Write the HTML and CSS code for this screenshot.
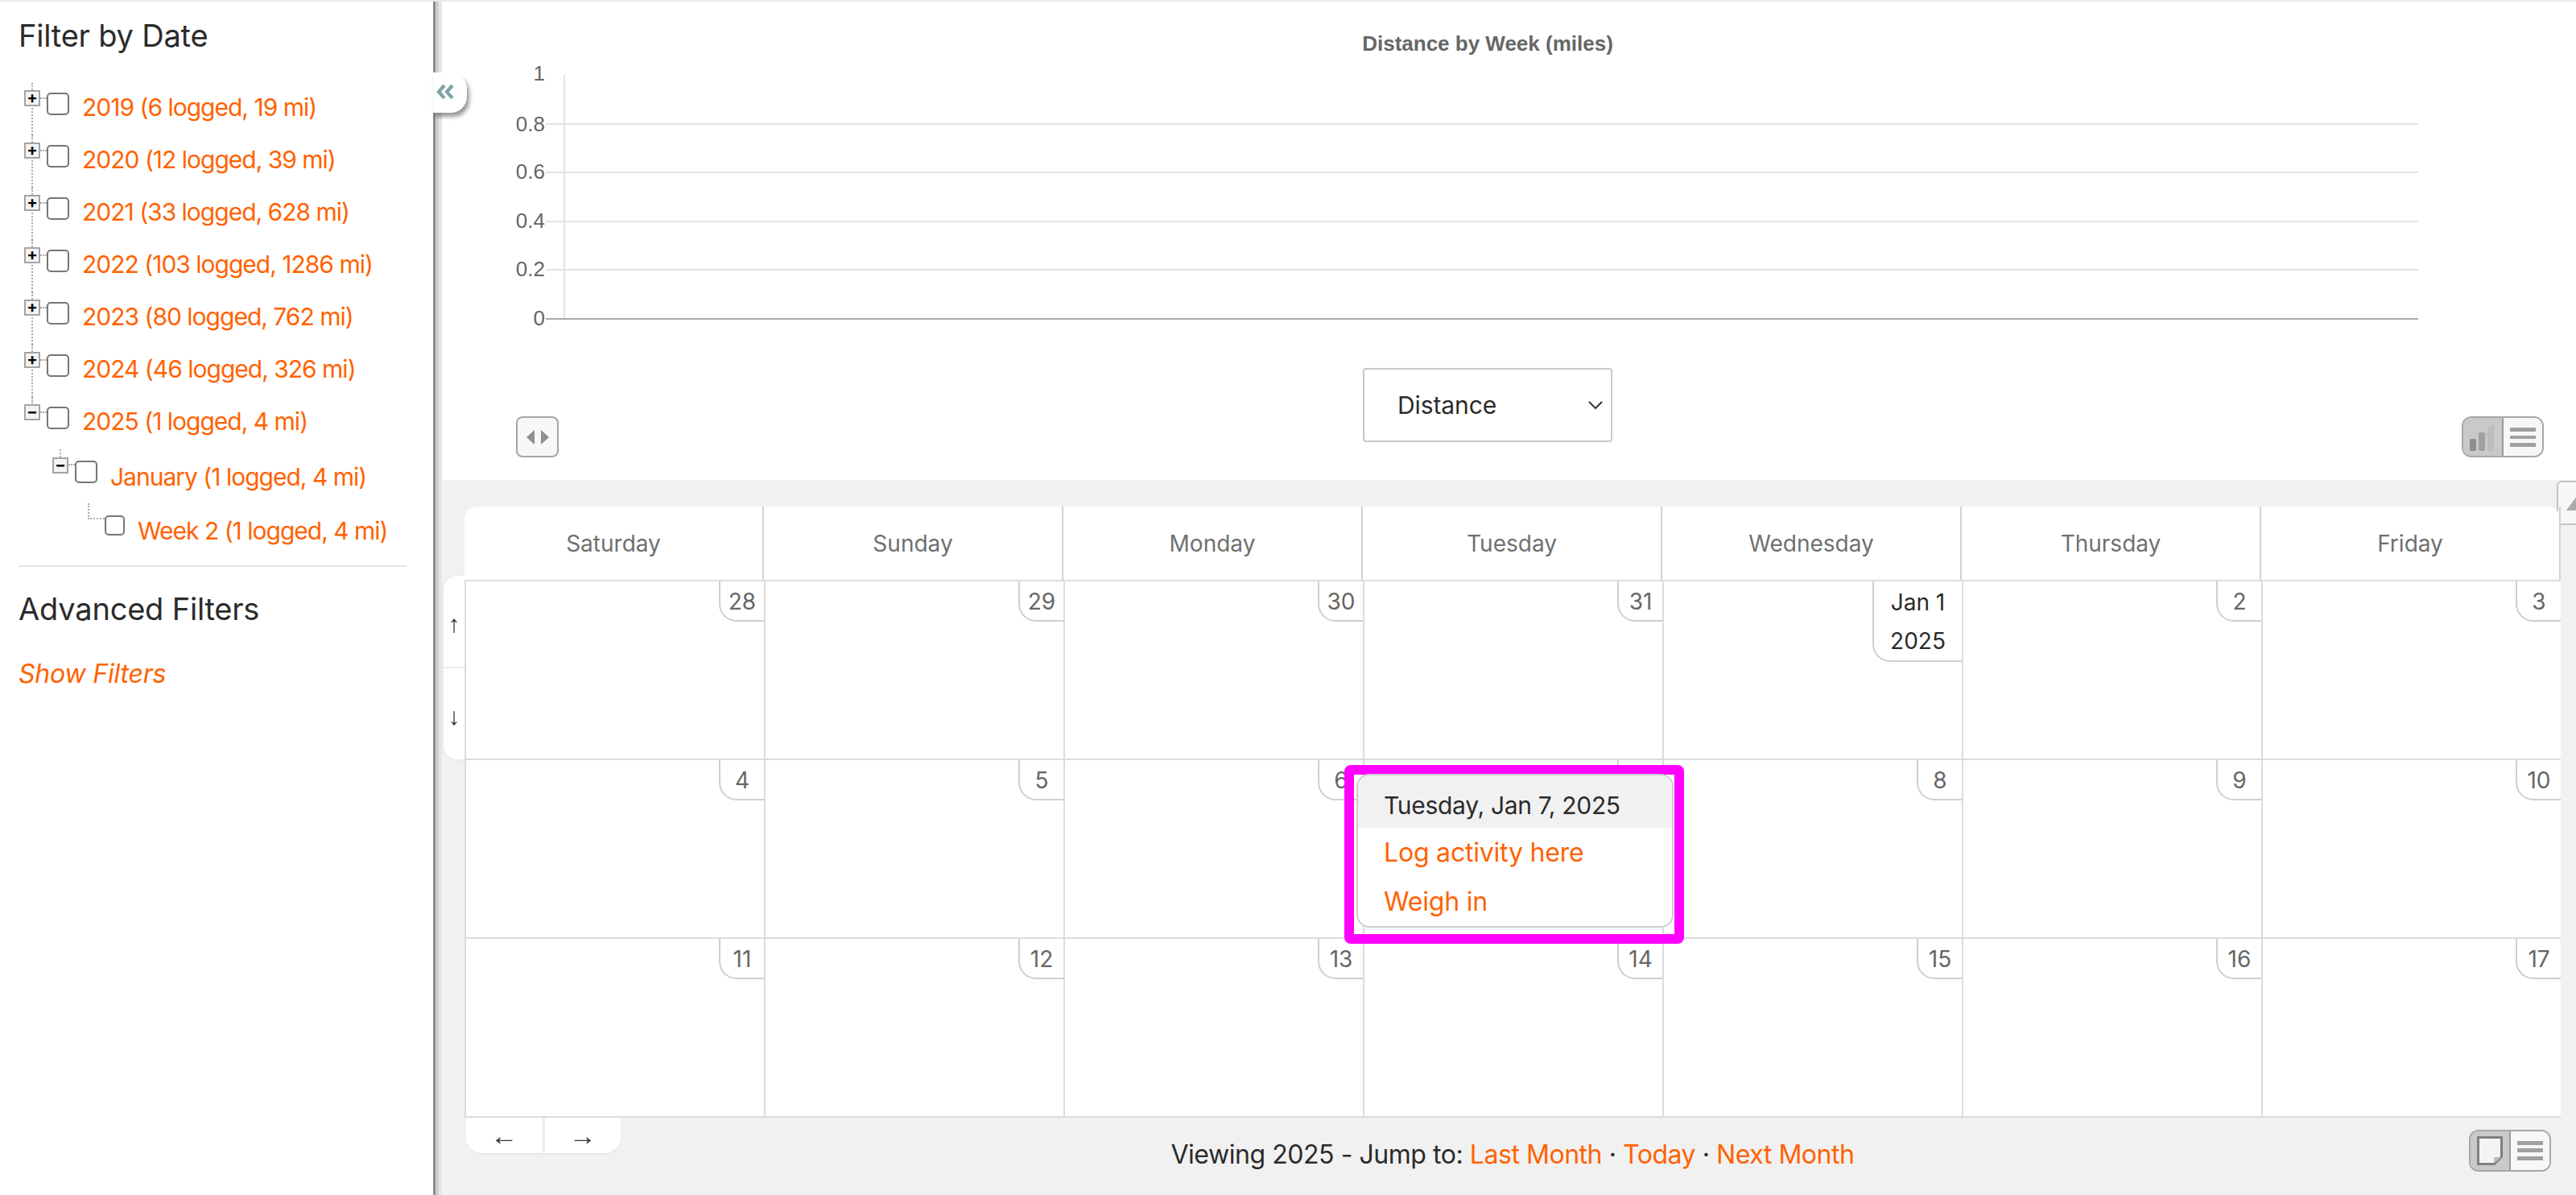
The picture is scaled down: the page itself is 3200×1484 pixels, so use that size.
FILE: index.html
```html
<!DOCTYPE html>
<html lang="en">
    <head>
        <meta charset="UTF-8" />
        <meta name="viewport" content="width=device-width, initial-scale=1.0" />
        <title>Activity log</title>
        <link rel="stylesheet" href="styles.css">
    </head>
    <body>
        <div class="page">
            <aside class="sidebar">
                <h2 class="side-title">Filter by Date</h2>
                <ul class="tree">
                    <li class="tree-row year">
                        <span class="toggle">+</span><span class="dash"></span><input type="checkbox" /><a class="tree-link" href="#">2019 (6 logged, 19 mi)</a>
                    </li>
                    <li class="tree-row year">
                        <span class="toggle">+</span><span class="dash"></span><input type="checkbox" /><a class="tree-link" href="#">2020 (12 logged, 39 mi)</a>
                    </li>
                    <li class="tree-row year">
                        <span class="toggle">+</span><span class="dash"></span><input type="checkbox" /><a class="tree-link" href="#">2021 (33 logged, 628 mi)</a>
                    </li>
                    <li class="tree-row year">
                        <span class="toggle">+</span><span class="dash"></span><input type="checkbox" /><a class="tree-link" href="#">2022 (103 logged, 1286 mi)</a>
                    </li>
                    <li class="tree-row year">
                        <span class="toggle">+</span><span class="dash"></span><input type="checkbox" /><a class="tree-link" href="#">2023 (80 logged, 762 mi)</a>
                    </li>
                    <li class="tree-row year">
                        <span class="toggle">+</span><span class="dash"></span><input type="checkbox" /><a class="tree-link" href="#">2024 (46 logged, 326 mi)</a>
                    </li>
                    <li class="tree-row year last">
                        <span class="toggle">&minus;</span><span class="dash"></span><input type="checkbox" /><a class="tree-link" href="#">2025 (1 logged, 4 mi)</a>
                    </li>
                    <li class="tree-row month">
                        <span class="toggle">&minus;</span><span class="dash"></span><input type="checkbox" /><a class="tree-link" href="#">January (1 logged, 4 mi)</a>
                    </li>
                    <li class="tree-row week">
                        <span class="elbow"></span><input type="checkbox" /><a class="tree-link" href="#">Week 2 (1 logged, 4 mi)</a>
                    </li>
                </ul>
                <hr class="side-rule" />
                <h2 class="side-title advanced">Advanced Filters</h2>
                <a class="show-filters" href="#">Show Filters</a>
                <button class="collapse" aria-label="Collapse">
                    <svg width="24" height="18" viewBox="0 0 24 18"><path d="M11 1 4 9l7 8M21 1l-7 8 7 8" fill="none" stroke="#7fa3a8" stroke-width="4.200"/></svg>
                </button>
            </aside>

            <main class="content">
                <section class="chart-panel">
                    <svg class="chart" width="2659" height="455" viewBox="541 2 2659 455">
                        <text class="chart-title" x="1848" y="63">Distance by Week (miles)</text>
                        <g class="chart-grid">
                            <line x1="678" y1="154" x2="3004" y2="154" />
                            <line x1="678" y1="214" x2="3004" y2="214" />
                            <line x1="678" y1="275" x2="3004" y2="275" />
                            <line x1="678" y1="335" x2="3004" y2="335" />
                            <line x1="701" y1="93" x2="701" y2="396" />
                        </g>
                        <line class="chart-axis" x1="678" y1="396" x2="3004" y2="396" />
                        <g class="chart-labels">
                            <text x="677" y="100">1</text>
                            <text x="677" y="163">0.8</text>
                            <text x="677" y="222">0.6</text>
                            <text x="677" y="283">0.4</text>
                            <text x="677" y="343">0.2</text>
                            <text x="677" y="404">0</text>
                        </g>
                    </svg>
                    <div class="chart-controls">
                        <button class="icon-btn" aria-label="Pan">
                            <svg width="30" height="20" viewBox="0 0 30 20"><path d="M11 1v18L1 10zM19 1v18l10-9z" fill="#8f8f8f"/></svg>
                        </button>
                        <div class="metric-select">
                            <span>Distance</span>
                            <svg width="20" height="12" viewBox="0 0 20 12"><path d="m2 2 8 8 8-8" fill="none" stroke="#333" stroke-width="2"/></svg>
                        </div>
                        <div class="view-toggle chart-toggle">
                            <span class="view-btn on">
                                <svg width="34" height="34" viewBox="0 0 34 34"><rect x="1" y="19" width="8" height="15" rx="2" fill="#8d8d8d"/><rect x="12" y="11" width="8" height="23" rx="2" fill="#a0a0a0"/><path d="M23 6l8-5v33h-8z" fill="#bdbdbd"/></svg>
                            </span>
                            <span class="view-btn"><span class="bars"></span></span>
                        </div>
                    </div>
                </section>

                <section class="calendar-panel">
                    <div class="scroll-up"></div>
                    <div class="week-nav">
                        <button class="week-btn">&uarr;</button>
                        <button class="week-btn">&darr;</button>
                    </div>
                    <div class="calendar">
                        <div class="day-head">
                            <div>Saturday</div>
                            <div>Sunday</div>
                            <div>Monday</div>
                            <div>Tuesday</div>
                            <div>Wednesday</div>
                            <div>Thursday</div>
                            <div>Friday</div>
                        </div>
                        <div class="day-grid">
                            <div class="cell"><span class="date">28</span></div>
                            <div class="cell"><span class="date">29</span></div>
                            <div class="cell"><span class="date">30</span></div>
                            <div class="cell"><span class="date">31</span></div>
                            <div class="cell"><span class="date first">Jan 1<br />2025</span></div>
                            <div class="cell"><span class="date">2</span></div>
                            <div class="cell"><span class="date">3</span></div>
                            <div class="cell"><span class="date">4</span></div>
                            <div class="cell"><span class="date">5</span></div>
                            <div class="cell"><span class="date">6</span></div>
                            <div class="cell"><span class="date">7</span></div>
                            <div class="cell"><span class="date">8</span></div>
                            <div class="cell"><span class="date">9</span></div>
                            <div class="cell"><span class="date">10</span></div>
                            <div class="cell"><span class="date">11</span></div>
                            <div class="cell"><span class="date">12</span></div>
                            <div class="cell"><span class="date">13</span></div>
                            <div class="cell"><span class="date">14</span></div>
                            <div class="cell"><span class="date">15</span></div>
                            <div class="cell"><span class="date">16</span></div>
                            <div class="cell"><span class="date">17</span></div>
                        </div>
                        <div class="day-popup">
                            <div class="popup-inner">
                                <div class="popup-head">Tuesday, Jan 7, 2025</div>
                                <a class="popup-link" href="#">Log activity here</a>
                                <a class="popup-link" href="#">Weigh in</a>
                            </div>
                        </div>
                    </div>
                    <div class="calendar-foot">
                        <div class="month-nav">
                            <button class="month-btn">&larr;</button>
                            <button class="month-btn">&rarr;</button>
                        </div>
                        <p class="jump">Viewing 2025 - Jump to: <a href="#">Last Month</a> &middot; <a href="#">Today</a> &middot; <a href="#">Next Month</a></p>
                        <div class="view-toggle foot-toggle">
                            <span class="view-btn on">
                                <svg width="32" height="36" viewBox="0 0 32 36"><path d="M1.500 1.500h29v24l-9 9h-20z" fill="#f4f4f4" stroke="#808080" stroke-width="3"/><path d="M30 26h-9v8z" fill="#bbb"/></svg>
                            </span>
                            <span class="view-btn"><span class="bars"></span></span>
                        </div>
                    </div>
                </section>
            </main>
        </div>
    </body>
</html>
```

FILE: styles.css
```css
* {
    margin: 0;
    padding: 0;
    box-sizing: border-box;
}

body {
    font-family: Inter, "Liberation Sans", sans-serif;
    color: #2b2b2b;
    background: #fff;
}

a {
    color: #ff6200;
    text-decoration: none;
}

button {
    font-family: inherit;
    background: #fff;
    border: 0;
}

.page {
    display: flex;
    height: 1484px;
    border-top: 2px solid #e8e8e8;
    overflow: hidden;
}

/* Sidebar */

.sidebar {
    position: relative;
    z-index: 3;
    flex: 0 0 541px;
    padding: 20px 33px 0 23px;
    background: #fff;
    border-right: 3px solid #8c8c8c;
    box-shadow: 4px 0 0 #cfcfcf, 8px 0 0 #e6e6e6;
}

.side-title {
    font-size: 38px;
    font-weight: 400;
    line-height: 44px;
    letter-spacing: -.2px;
}

.tree {
    list-style: none;
    margin: 37px 0 0 7px;
}

.tree-row {
    position: relative;
    display: flex;
    align-items: flex-start;
    height: 65px;
}

.tree-row.year::before {
    content: "";
    position: absolute;
    left: 9px;
    top: 0;
    height: 65px;
    border-left: 2px dotted #aaa;
}

.tree-row.last::before {
    height: 8px;
}

.tree-row.month {
    margin-left: 35px;
    height: 67px;
}

.tree-row.month::before {
    content: "";
    position: absolute;
    left: 9px;
    top: 0;
    height: 10px;
    border-left: 2px dotted #aaa;
}

.tree-row.week {
    margin-left: 79px;
}

.toggle {
    position: relative;
    z-index: 1;
    flex: 0 0 20px;
    height: 20px;
    margin-top: 9px;
    font-size: 20px;
    font-weight: 700;
    line-height: 15px;
    text-align: center;
    color: #000;
    background: #f4f4f4;
    border: 2px solid #a4a4a4;
}

.month .toggle {
    margin-top: 10px;
}

.dash {
    flex: 0 0 8px;
    margin-top: 18px;
    border-top: 2px dotted #aaa;
}

.elbow {
    flex: 0 0 21px;
    height: 20px;
    border-left: 2px dotted #aaa;
    border-bottom: 2px dotted #aaa;
}

.tree-row input {
    flex: none;
    width: 28px;
    height: 28px;
    margin-top: 12px;
    appearance: none;
    background: #fff;
    border: 2px solid #767676;
    border-radius: 5px;
}

.tree-row.month input {
    margin-top: 14px;
}

.tree-row.week input {
    width: 25px;
    height: 25px;
    margin-top: 15px;
}

.tree-link {
    margin-left: 16px;
    font-size: 30px;
    line-height: 60px;
    letter-spacing: -1px;
    white-space: nowrap;
}

.month .tree-link,
.week .tree-link {
    line-height: 68px;
}

.side-rule {
    height: 2px;
    margin-top: 12px;
    background: #e6e6e6;
    border: 0;
}

.advanced {
    margin-top: 30px;
}

.show-filters {
    display: block;
    margin-top: 40px;
    font-size: 32px;
    font-style: italic;
    line-height: 38px;
    letter-spacing: -.2px;
}

.collapse {
    position: absolute;
    left: 538px;
    top: 88px;
    width: 42px;
    height: 50px;
    padding-right: 12px;
    border-radius: 0 20px 20px 0;
    box-shadow: 3px 5px 5px rgba(0, 0, 0, .4);
}

/* Chart */

.content {
    flex: 1;
    min-width: 0;
    display: flex;
    flex-direction: column;
}

.chart-panel {
    height: 594px;
    background: #fff;
}

.chart {
    display: block;
}

.chart-title {
    font-family: "Liberation Sans", sans-serif;
    font-size: 26px;
    font-weight: 700;
    text-anchor: middle;
    fill: #666;
}

.chart-grid line {
    stroke: #e4e4e4;
    stroke-width: 2;
}

.chart-axis {
    stroke: #a8a8a8;
    stroke-width: 2;
}

.chart-labels text {
    font-family: "Liberation Sans", sans-serif;
    font-size: 26px;
    text-anchor: end;
    fill: #666;
}

.chart-controls {
    display: flex;
    align-items: flex-start;
    padding: 0 40px 0 100px;
}

.icon-btn {
    display: flex;
    align-items: center;
    justify-content: center;
    width: 53px;
    height: 51px;
    margin-top: 60px;
    background: #f7f7f7;
    border: 2px solid #a6a6a6;
    border-radius: 8px;
}

.metric-select {
    display: flex;
    align-items: center;
    justify-content: space-between;
    width: 310px;
    height: 92px;
    margin-left: 999px;
    padding: 0 9px 0 41px;
    font-size: 30px;
    background: #fff;
    border: 2px solid #c8c8c8;
    border-radius: 4px;
}

.metric-select span {
    letter-spacing: -.1px;
}

.view-toggle {
    display: flex;
    width: 102px;
    height: 52px;
    border: 2px solid #a6a6a6;
    border-radius: 12px;
    overflow: hidden;
}

.chart-toggle {
    height: 51px;
    margin: 60px 0 0 auto;
}

.view-btn {
    flex: 1;
    display: flex;
    align-items: center;
    justify-content: center;
    background: #f7f7f7;
}

.view-btn.on {
    background: #c9c9c9;
    border-right: 2px solid #999;
}

.bars {
    width: 32px;
    height: 24px;
    background: repeating-linear-gradient(#a0a0a0 0 5px, transparent 5px 9.500px);
}

/* Calendar */

.calendar-panel {
    position: relative;
    flex: 1;
    padding: 33px 19px 0 36px;
    background: #f1f1f1;
}

.scroll-up {
    position: absolute;
    right: 0;
    top: 1px;
    width: 24px;
    height: 55px;
    background: #f7f7f7;
    border: 2px solid #c4c4c4;
    border-right: 0;
    border-radius: 6px 0 0 0;
}

.scroll-up::before {
    content: "";
    position: absolute;
    left: 10px;
    top: 17px;
    border-left: 13px solid transparent;
    border-right: 13px solid transparent;
    border-bottom: 18px solid #aaa;
}

.week-nav {
    position: absolute;
    left: 8px;
    top: 117px;
    display: flex;
    flex-direction: column;
    width: 30px;
    height: 232px;
    background: #fff;
    border: 2px solid #ececec;
    border-right-color: #e2e2e2;
    border-radius: 20px 0 0 20px;
    overflow: hidden;
}

.week-btn {
    flex: 1;
    padding-top: 6px;
    font-family: "Liberation Sans", sans-serif;
    font-size: 30px;
    line-height: 1;
    color: #333;
}

.week-btn + .week-btn {
    border-top: 2px solid #ececec;
}

.calendar {
    position: relative;
    background: #fff;
    border-radius: 16px 16px 0 0;
}

.day-head {
    display: grid;
    grid-template-columns: repeat(7, 372px);
    height: 93px;
    border-bottom: 2px solid #dcdcdc;
}

.day-head div {
    font-size: 28px;
    line-height: 92px;
    text-align: center;
    color: #707070;
    border-right: 2px solid #d2d2d2;
}

.day-grid {
    display: grid;
    grid-template-columns: repeat(6, 372px) 1fr;
    grid-auto-rows: 222px;
    border-left: 2px solid #dcdcdc;
}

.cell {
    display: flex;
    justify-content: flex-end;
    align-items: flex-start;
    border-right: 2px solid #dcdcdc;
    border-bottom: 2px solid #dcdcdc;
}

.cell:nth-child(7n) {
    border-right: 0;
}

.date {
    min-width: 56px;
    padding-top: 2px;
    font-size: 28px;
    line-height: 46px;
    text-align: center;
    color: #666;
    background: #fff;
    border-left: 2px solid #cfcfcf;
    border-bottom: 2px solid #cfcfcf;
    border-radius: 0 0 0 22px;
}

.date.first {
    width: 111px;
    line-height: 48px;
    color: #2b2b2b;
}

.day-popup {
    position: absolute;
    left: 1093px;
    top: 321px;
    width: 422px;
    height: 222px;
    border: 12px solid #ff00ff;
    border-radius: 8px;
}

.popup-inner {
    height: 191px;
    margin: -1px 1px 0 3px;
    background: #fff;
    border: 2px solid #cccccc;
    border-radius: 16px;
    overflow: hidden;
}

.popup-head {
    height: 65px;
    padding-left: 32px;
    font-size: 30px;
    line-height: 74px;
    letter-spacing: -.3px;
    background: #f1f1f1;
}

.popup-link {
    display: block;
    padding-left: 32px;
    font-size: 32px;
    line-height: 61px;
    letter-spacing: -.2px;
}

.calendar-foot {
    display: grid;
    grid-template-columns: 1fr auto 1fr;
    align-items: start;
}

.month-nav {
    display: flex;
    width: 192px;
    height: 44px;
    margin-left: 2px;
    border-radius: 0 0 20px 20px;
    overflow: hidden;
    background: #fff;
    box-shadow: 0 2px 0 #e8e8e8;
}

.month-btn {
    flex: 1;
    font-family: "Liberation Sans", sans-serif;
    font-size: 34px;
    line-height: 44px;
    color: #333;
}

.month-btn + .month-btn {
    border-left: 3px solid #ececec;
}

.jump {
    padding-top: 24px;
    font-size: 32px;
    line-height: 44px;
    letter-spacing: -.45px;
}

.foot-toggle {
    justify-self: end;
    margin: 15px 12px 0 0;
}
```
